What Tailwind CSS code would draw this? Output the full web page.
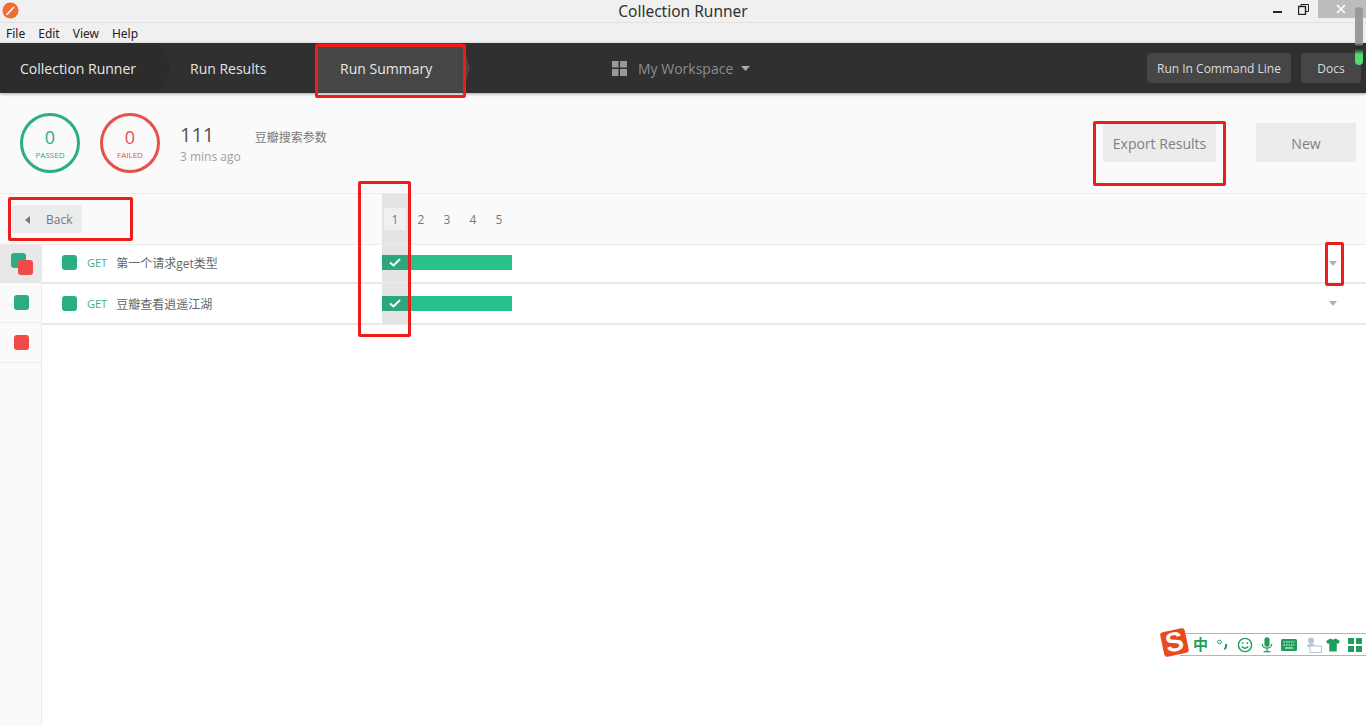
<!DOCTYPE html>
<html><head><meta charset="utf-8">
<script src="https://cdn.jsdelivr.net/npm/@tailwindcss/browser@4"></script>
</head>
<body class="m-0">
<div class="relative w-[1366px] h-[726px] overflow-hidden flex flex-col bg-white font-['Open_Sans','Noto_Sans_CJK_SC',sans-serif]">
  <!-- title bar -->
  <div class="h-[23px] shrink-0 bg-[#f0f0f0] border-b border-[#e2e2e2] flex items-center relative">
    <svg class="ml-[2px] mt-[-1px]" width="17" height="17" viewBox="0 0 17 17"><circle cx="8.5" cy="8.5" r="8" fill="#ef6c35"/><path d="M5 12.5 L12 5" stroke="#fff" stroke-width="1.6"/><path d="M4 13 l1.5 -.4 -1 -1z" fill="#fff"/></svg>
    <div class="absolute left-0 right-0 top-0 h-[23px] leading-[23px] text-center text-[15.5px] text-[#333] font-['Noto_Sans',sans-serif]">Collection Runner</div>
    <div class="ml-auto flex items-center h-full">
      <div class="w-[24px] h-full flex items-center justify-center"><span class="block w-[9px] h-[2px] mt-[2px] mr-[5px] bg-[#222]"></span></div>
      <svg class="mx-[6px] mb-[3px]" width="11" height="11" viewBox="0 0 11 11" fill="none" stroke="#222"><rect x=".5" y="2.5" width="7" height="8" stroke-width="1.4"/><path d="M3 2.5V.5h7.500v7H7.500"/></svg>
      <div class="ml-[3px] w-[48px] h-[18px] self-start bg-[#bcbcbc] flex items-center justify-center text-white">
        <svg width="10" height="10" viewBox="0 0 10 10" class="mr-[3px]"><path d="M1 1l8 8M9 1l-8 8" stroke="#fff" stroke-width="1.6"/></svg>
      </div>
    </div>
  </div>
  <!-- menu bar -->
  <div class="h-[20px] shrink-0 bg-[#f0f0f0] flex items-center pl-[6px] pt-[1px] gap-[13px] text-[12px] text-[#222] font-['Noto_Sans',sans-serif]">
    <span>File</span><span>Edit</span><span>View</span><span>Help</span>
  </div>
  <!-- dark header -->
  <div class="h-[50px] shrink-0 bg-[#303030] flex items-center relative z-10 shadow-[0_1px_3px_rgba(0,0,0,0.35)] text-[14px]">
    <div class="w-[170px] h-full bg-[#2c2c2c] [clip-path:polygon(0_0,160px_0,170px_50%,160px_100%,0_100%)] flex items-center pl-[20px] text-[#e8e8e8]">Collection Runner</div>
    <div class="w-[146px] h-full flex items-center pl-[20px] text-[#e2e2e2]">Run Results</div>
    <div class="w-[154px] h-full bg-[#464646] [clip-path:polygon(0_0,146px_0,154px_50%,146px_100%,0_100%)] flex items-center pl-[24px] text-[#e8e8e8]">Run Summary</div>
    <div class="ml-[142px] flex items-center text-[#8c8c8c]">
      <svg width="15" height="15" viewBox="0 0 15 15" fill="#999"><rect width="6.500" height="6.500"/><rect x="8" width="7" height="6.500"/><rect y="8" width="6.500" height="7"/><rect x="8" y="8" width="7" height="7"/></svg>
      <span class="ml-[11px]">My Workspace</span>
      <svg class="ml-[8px]" width="9" height="5" viewBox="0 0 9 5" fill="#aaa"><path d="M0 0h9L4.500 5z"/></svg>
    </div>
    <div class="ml-auto flex items-center gap-[10px] pr-[5px] text-[12px] text-[#dcdcdc]">
      <div class="h-[30px] w-[144px] pt-[1px] rounded-[3px] bg-[#464646] flex items-center justify-center">Run In Command Line</div>
      <div class="h-[30px] w-[60px] pt-[1px] rounded-[3px] bg-[#464646] flex items-center justify-center">Docs</div>
    </div>
  </div>
  <!-- summary -->
  <div class="h-[101px] shrink-0 bg-[#fafafa] border-b border-[#ececec] flex items-start pl-[20px] pt-[20px]">
    <div class="w-[60px] h-[60px] rounded-full border-[3px] border-[#2bae84] flex flex-col items-center justify-center text-[#2bae84]">
      <span class="text-[18px] leading-[20px]">0</span><span class="text-[8px] leading-[10px] mt-[3px]">PASSED</span>
    </div>
    <div class="ml-[20px] w-[60px] h-[60px] rounded-full border-[3px] border-[#e8504c] flex flex-col items-center justify-center text-[#e8504c]">
      <span class="text-[18px] leading-[20px]">0</span><span class="text-[8px] leading-[10px] mt-[3px]">FAILED</span>
    </div>
    <div class="ml-[20px] flex flex-col">
      <span class="text-[20px] leading-[28px] mt-[8px] text-[#555]">111</span>
      <span class="text-[12px] leading-[16px] text-[#a0a0a0]">3 mins ago</span>
    </div>
    <span class="ml-[14px] mt-[16px] text-[12px] leading-[18px] text-[#777]">豆瓣搜索参数</span>
    <div class="ml-auto flex gap-[40px] pr-[10px] text-[14px] text-[#808080]">
      <div class="w-[113px] h-[39px] mt-[10px] pt-[1px] bg-[#ececec] flex items-center justify-center">Export Results</div>
      <div class="w-[100px] h-[39px] mt-[10px] pt-[1px] bg-[#ececec] flex items-center justify-center">New</div>
    </div>
  </div>
  <!-- back row -->
  <div class="h-[51px] shrink-0 bg-[#fafafa] border-b border-[#ececec] flex">
    <div class="w-[382px] shrink-0 pl-[12px] pt-[11px]">
      <div class="w-[70px] h-[28px] pt-[1px] bg-[#ececec] flex items-center text-[12px] text-[#777]">
        <svg class="ml-[13px]" width="5" height="8" viewBox="0 0 5 8" fill="#777"><path d="M5 0v8L0 4z"/></svg>
        <span class="ml-[16px]">Back</span>
      </div>
    </div>
    <div class="w-[26px] bg-[#e4e4e4] flex items-center justify-center">
      <span class="w-[22px] h-[22px] pt-[1px] bg-[#f0f0f0] flex items-center justify-center text-[12px] text-[#777]">1</span>
    </div>
    <div class="flex text-[12px] text-[#777] items-center pt-[2px]">
      <span class="w-[26px] text-center">2</span><span class="w-[26px] text-center">3</span><span class="w-[26px] text-center">4</span><span class="w-[26px] text-center">5</span>
    </div>
  </div>
  <!-- body -->
  <div class="flex-1 flex min-h-0">
    <div class="w-[42px] shrink-0 bg-[#fafafa] border-r border-[#ececec] flex flex-col">
      <div class="h-[38px] bg-[#e8e8e8] relative">
        <span class="absolute left-[11px] top-[8px] w-[15px] h-[15px] rounded-[3px] bg-[#2bae84]"></span>
        <span class="absolute left-[18px] top-[15px] w-[15px] h-[15px] rounded-[3px] bg-[#ef4b48]"></span>
      </div>
      <div class="h-[40px] pl-[1px] border-b border-[#ececec] flex items-center justify-center"><span class="w-[15px] h-[15px] rounded-[3px] bg-[#2bae84]"></span></div>
      <div class="h-[40px] pl-[1px] border-b border-[#ececec] flex items-center justify-center"><span class="w-[15px] h-[15px] rounded-[3px] bg-[#ef4b48]"></span></div>
    </div>
    <div class="flex-1 flex flex-col">
      <div class="h-[39px] border-b-2 border-[#e8e8e8] flex items-center relative">
        <div class="w-[340px] shrink-0 flex items-center pl-[20px] text-[12px] mb-[2px]">
          <span class="w-[15px] h-[15px] rounded-[3px] bg-[#2bae84]"></span>
          <span class="ml-[10px] mt-[2px] text-[11px] text-[#3fae8a]">GET</span>
          <span class="ml-[9px] mt-[2px] text-[#666]">第一个请求get类型</span>
        </div>
        <div class="w-[26px] h-full bg-[#e4e4e4] flex items-center">
          <div class="w-[26px] h-[15px] mb-[2px] bg-[#2ba67d] flex items-center justify-center"><svg width="12" height="9" viewBox="0 0 12 9" fill="none"><path d="M1 4.500l3.500 3L11 1" stroke="#fff" stroke-width="2"/></svg></div>
        </div>
        <div class="w-[104px] h-[15px] mb-[2px] bg-[#27c28a]"></div>
        <svg class="ml-auto mr-[29px]" width="8" height="5" viewBox="0 0 8 5" fill="#b0b0b0"><path d="M0 0h8L4 5z"/></svg>
      </div>
      <div class="h-[41px] border-b-2 border-[#e8e8e8] flex items-center relative">
        <div class="w-[340px] shrink-0 flex items-center pl-[20px] text-[12px]">
          <span class="w-[15px] h-[15px] rounded-[3px] bg-[#2bae84]"></span>
          <span class="ml-[10px] mt-[2px] text-[11px] text-[#3fae8a]">GET</span>
          <span class="ml-[9px] mt-[2px] text-[#666]">豆瓣查看逍遥江湖</span>
        </div>
        <div class="w-[26px] h-full bg-[#e4e4e4] flex items-center">
          <div class="w-[26px] h-[15px] bg-[#2ba67d] flex items-center justify-center"><svg width="12" height="9" viewBox="0 0 12 9" fill="none"><path d="M1 4.500l3.500 3L11 1" stroke="#fff" stroke-width="2"/></svg></div>
        </div>
        <div class="w-[104px] h-[15px] bg-[#27c28a]"></div>
        <svg class="ml-auto mr-[29px]" width="8" height="5" viewBox="0 0 8 5" fill="#b0b0b0"><path d="M0 0h8L4 5z"/></svg>
      </div>
    </div>
  </div>
  <!-- annotations -->
  <div class="absolute z-20 left-[315px] top-[44px] w-[151px] h-[54px] border-[3px] border-[#ee1c1c] rounded-[2px]"></div>
  <div class="absolute z-20 left-[1093px] top-[121px] w-[133px] h-[65px] border-[3px] border-[#ee1c1c] rounded-[2px]"></div>
  <div class="absolute z-20 left-[8px] top-[197px] w-[125px] h-[44px] border-[3px] border-[#ee1c1c] rounded-[2px]"></div>
  <div class="absolute z-20 left-[358px] top-[181px] w-[53px] h-[156px] border-[3px] border-[#ee1c1c] rounded-[2px]"></div>
  <div class="absolute z-20 left-[1325px] top-[242px] w-[19px] h-[44px] border-[3px] border-[#ee1c1c] rounded-[2px]"></div>
  <!-- scrollbar-like overlay at top right -->
  <div class="absolute z-20 left-[1355px] top-[7px] w-[8px] h-[58px] rounded-[4px] bg-[linear-gradient(#9a9a9a_0,#9a9a9a_62%,#2c2c2c_68%,#2c2c2c_72%,#4fdc6f_82%,#4fdc6f_100%)]"></div>
  <!-- IME toolbar -->
  <div class="absolute z-20 left-[1160px] top-[629px] w-[206px] h-[28px]">
    <div class="absolute left-[20px] top-[4px] right-0 h-[23px] bg-white border-y border-[#b5b5b5] flex items-center pl-[13px]">
      <span class="text-[15px] leading-none font-bold text-[#1e9e5a] w-[15px] overflow-visible whitespace-nowrap">中</span>
      <svg class="ml-[9px]" width="11" height="12" viewBox="0 0 11 12" fill="none"><circle cx="2.500" cy="3" r="1.800" stroke="#1e9e5a"/><path d="M9 5v3l-1.500 2.500" stroke="#1e9e5a" stroke-width="2"/></svg>
      <svg class="ml-[9px]" width="16" height="16" viewBox="0 0 17 17" fill="none" stroke="#1e9e5a" stroke-width="1.500"><circle cx="8.500" cy="8.500" r="7"/><path d="M5 10c1.500 2.500 5.500 2.500 7 0"/><path d="M6 5.500v2M11 5.500v2"/></svg>
      <svg class="ml-[8px]" width="12" height="18" viewBox="0 0 14 18" fill="#1e9e5a"><rect x="4" y="0" width="6" height="11" rx="3"/><path d="M1.500 7.500c0 7 11 7 11 0" fill="none" stroke="#1e9e5a" stroke-width="1.500"/><rect x="6.300" y="13" width="1.500" height="3"/><rect x="3" y="16" width="8" height="1.500"/></svg>
      <svg class="ml-[8px]" width="16" height="12" viewBox="0 0 16 12"><rect width="16" height="12" rx="1.500" fill="#1e9e5a"/><path d="M2.500 3h11M2.500 6h11" stroke="#fff" stroke-dasharray="1.500 1"/><path d="M4 9h8" stroke="#fff"/></svg>
      <svg class="ml-[8px]" width="17" height="16" viewBox="0 0 17 16" fill="#b6c4d6"><circle cx="6" cy="3.500" r="3"/><path d="M2 10c0-5 8-5 8 0z"/><rect x="5" y="9" width="11.500" height="6.500" fill="#fff" stroke="#b6c4d6"/></svg>
      <svg class="ml-[4px]" width="14" height="14" viewBox="0 0 15 14" fill="#1e9e5a"><path d="M4.500 0l3 1.500L10.500 0 15 3l-2 3-1.500-.8V14h-8V5.200L2 6 0 3z"/></svg>
      <svg class="ml-[8px]" width="14" height="14" viewBox="0 0 14 14" fill="#1e9e5a"><rect width="6" height="6"/><rect x="8" width="6" height="6" rx="1"/><rect y="8" width="6" height="6"/><rect x="8" y="8" width="6" height="6"/></svg>
    </div>
    <div class="absolute left-[2px] top-[1px] w-[25px] h-[25px] bg-[#e8491f] rounded-[3px] rotate-[-12deg] flex items-center justify-center text-white font-black text-[27px] leading-none font-['Liberation_Sans',sans-serif]">S</div>
  </div>
</div>
</body></html>
